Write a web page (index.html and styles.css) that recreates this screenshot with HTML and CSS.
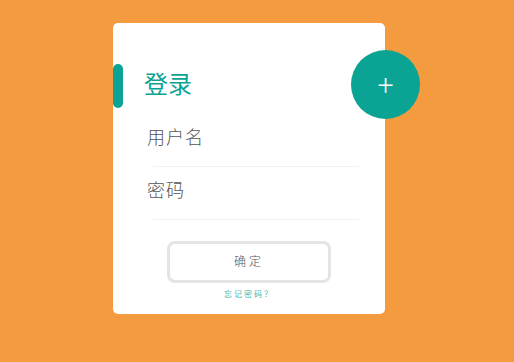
FILE: index.html
```html
<!DOCTYPE html>
<html lang="zh">
<head>
    <meta charset="UTF-8">
    <title>登录</title>
    <link rel="stylesheet" href="styles.css">
</head>
<body>
    <div class="card">
        <!-- 右上角的圆形按钮 -->
        <div class="add-btn">+</div>
        <h2 class="title">登录</h2>
        <div class="field">
            <label>用户名</label>
        </div>
        <div class="field">
            <label>密码</label>
        </div>
        <div class="actions">
            <button class="btn">确定</button>
            <a class="forgot" href="#">忘记密码？</a>
        </div>
    </div>
</body>
</html>
```

FILE: styles.css
```css
* {
    margin: 0;
    padding: 0;
    box-sizing: border-box;
}

body {
    background: #f49a3f;
    font-family: "Noto Sans CJK SC", "Noto Sans", sans-serif;
    width: 514px;
    height: 362px;
    padding-top: 23px;
}

.card {
    position: relative;
    width: 272px;
    height: 291px;
    margin-left: 113px;
    background: #fff;
    border-radius: 5px;
    padding-top: 41px;
}

.title {
    position: relative;
    font-size: 24px;
    font-weight: normal;
    color: #0ba393;
    line-height: 38px;
    padding-left: 31px;
    padding-bottom: 6px;
    margin-bottom: 6px;
}

/* 左侧的竖条 */
.title::before {
    content: "";
    position: absolute;
    left: 0;
    top: 0;
    width: 10px;
    height: 44px;
    background: #0ba393;
    border-radius: 5px;
}

.add-btn {
    position: absolute;
    left: 238px;
    top: 27px;
    width: 69px;
    height: 69px;
    border-radius: 50%;
    background: #0ba393;
    color: #fff;
    font-size: 30px;
    font-weight: 300;
    line-height: 66px;
    text-align: center;
}

.field {
    margin: 0 26px 0 40px;
    height: 53px;
    padding-bottom: 9px;
    border-bottom: 1px solid #f3f3f3;
    display: flex;
    align-items: center;
}

.field label {
    font-size: 18px;
    font-weight: 300;
    color: #555;
    margin-left: -6px;
    letter-spacing: 1px;
}

.actions {
    display: flex;
    flex-direction: column;
    align-items: center;
    padding-top: 21px;
}

.btn {
    width: 164px;
    height: 42px;
    padding-bottom: 4px;
    background: #fff;
    border: 3px solid #e4e4e4;
    border-radius: 8px;
    font-family: inherit;
    font-size: 12px;
    font-weight: 300;
    color: #555;
    letter-spacing: 3px;
}

.forgot {
    margin-top: 5px;
    font-size: 8px;
    color: #3fb8ab;
    text-decoration: none;
    letter-spacing: 2px;
}
```
